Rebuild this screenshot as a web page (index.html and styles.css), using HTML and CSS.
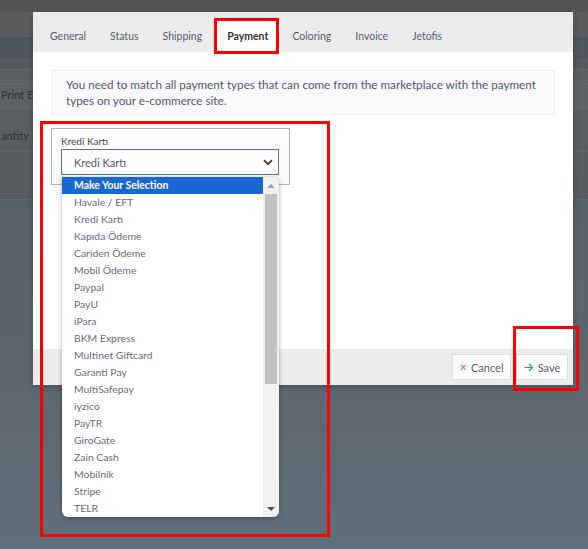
FILE: index.html
```html
<!DOCTYPE html>
<html>
<head>
<meta charset="utf-8">
<link rel="stylesheet" href="styles.css">
</head>
<body>
<div class="page">
  <div class="band b-top"></div>
  <div class="band b-nav"></div>
  <div class="band b-dark"></div>
  <div class="band b-dark2"></div>
  <div class="band b-thin"></div>
  <div class="band b-row"><span class="bg-text">Print E-</span><span class="bg-accent"></span></div>
  <div class="band b-gap"></div>
  <div class="band b-row2"><span class="bg-text">antity</span></div>
  <div class="band b-r3"></div>
  <div class="band b-r4"></div>
  <div class="band b-rest"></div>
</div>

<div class="modal">
  <div class="tabs">
    <span class="tab">General</span>
    <span class="tab">Status</span>
    <span class="tab">Shipping</span>
    <span class="tab active">Payment</span>
    <span class="tab">Coloring</span>
    <span class="tab">Invoice</span>
    <span class="tab">Jetofis</span>
  </div>
  <div class="body">
    <div class="alert">You need to match all payment types that can come from the marketplace with the payment types on your e-commerce site.</div>
    <div class="panel">
      <div class="label">Kredi Kartı</div>
      <div class="select">
        <span>Kredi Kartı</span>
        <svg class="chev" width="10" height="7" viewBox="0 0 10 7"><path d="M1 1.2 L5 5.2 L9 1.2" fill="none" stroke="#444" stroke-width="2"/></svg>
      </div>
    </div>
  </div>
  <div class="footer">
    <button class="btn btn-cancel"><span class="x">×</span>Cancel</button>
    <button class="btn btn-save"><svg class="arr" width="10" height="9" viewBox="0 0 10 9"><path d="M0.5 4.5 H8.5 M5 1 L8.5 4.5 L5 8" fill="none" stroke="#27a06a" stroke-width="1.2"/></svg>Save</button>
  </div>
</div>

<div class="dropdown">
  <ul class="options">
    <li class="sel">Make Your Selection</li>
    <li>Havale / EFT</li>
    <li>Kredi Kartı</li>
    <li>Kapıda Ödeme</li>
    <li>Cariden Ödeme</li>
    <li>Mobil Ödeme</li>
    <li>Paypal</li>
    <li>PayU</li>
    <li>iPara</li>
    <li>BKM Express</li>
    <li>Multinet Giftcard</li>
    <li>Garanti Pay</li>
    <li>MultiSafepay</li>
    <li>iyzico</li>
    <li>PayTR</li>
    <li>GiroGate</li>
    <li>Zain Cash</li>
    <li>Mobilnik</li>
    <li>Stripe</li>
    <li>TELR</li>
  </ul>
  <div class="scrollbar">
    <span class="sb-up"></span>
    <span class="sb-track"><span class="sb-thumb"></span></span>
    <span class="sb-down"></span>
  </div>
</div>

<div class="mark mark-tab"></div>
<div class="mark mark-list"></div>
<div class="mark mark-save"></div>
</body>
</html>
```
FILE: styles.css
```css
* { box-sizing: border-box; }
html, body { margin: 0; padding: 0; }
body {
  width: 588px;
  height: 549px;
  overflow: hidden;
  position: relative;
  font-family: Lato, "Open Sans", sans-serif;
  background: #5c6a74;
}
.page {
  display: flex;
  flex-direction: column;
  height: 549px;
}
.band { flex: none; display: flex; align-items: center; }
.b-top { height: 12px; background: #535557; }
.b-nav { height: 25px; background: #5b5c5e; }
.b-dark { height: 21px; background: #4f555a; }
.b-dark2 { height: 12px; background: #555a5e; border-bottom: 1px solid #62666a; }
.b-thin { height: 11px; background: #5a5f62; border-bottom: 1px solid #63676a; }
.b-row { height: 28px; background: #5e6265; border-bottom: 1px solid #65696c; }
.b-gap { height: 11px; background: #5b5f62; }
.b-row2 { height: 32px; background: #5b5f62; border-bottom: 1px solid #62666a; }
.b-r3 { height: 20px; background: #5a5e61; }
.b-r4 { height: 28px; background: #595d61; border-bottom: 1px solid #5f656a; }
.b-rest { flex: 1; background: linear-gradient(180deg, #596168 0%, #5c6770 50%, #5f707b 100%); }
.bg-text { font-size: 11px; color: #2a2e33; padding-left: 1px; }
.bg-accent { width: 3px; height: 12px; background: #8a6a2a; margin-left: 1px; }

.modal {
  position: absolute;
  left: 33px;
  top: 12px;
  width: 540px;
  height: 373px;
  background: #fff;
  display: flex;
  flex-direction: column;
  box-shadow: 0 2px 6px rgba(0,0,0,0.25);
}
.tabs {
  height: 40px;
  background: #ececec;
  display: flex;
  align-items: flex-end;
  padding-left: 5px;
}
.tab {
  height: 32px;
  padding: 0 12px;
  display: flex;
  align-items: center;
  font-size: 10.5px;
  color: #555d68;
}
.tab.active {
  background: #fff;
  color: #333;
  font-weight: bold;
  padding: 0 12px 0 13px;
}
.body {
  flex: 1;
  padding: 18px 18px 0 18px;
}
.alert {
  height: 45px;
  background: #fafafa;
  border: 1px solid #eeeeee;
  padding: 5px 6px 5px 14px;
  font-size: 11.7px;
  line-height: 16px;
  color: #4f556c;
}
.panel {
  margin-top: 13px;
  width: 239px;
  height: 57px;
  border: 1px solid #b0b0b0;
  background: linear-gradient(180deg, #fff 0%, #f8f8f8 100%);
  padding: 5px 10px 0 9px;
}
.label {
  font-size: 10px;
  color: #444;
  height: 15px;
  line-height: 15px;
}
.select {
  height: 26px;
  border: 1px solid #4a7d92;
  background: #fff;
  display: flex;
  align-items: center;
  justify-content: space-between;
  padding: 0 5px 0 12px;
  font-size: 11px;
  color: #555;
}
.chev { display: block; }
.footer {
  height: 36px;
  background: #ececec;
  display: flex;
  justify-content: flex-end;
  align-items: center;
  gap: 5px;
  padding-right: 5px;
}
.btn {
  height: 26px;
  margin: 0;
  border: 1px solid #dddddd;
  background: #fff;
  font-family: Lato, "Open Sans", sans-serif;
  font-size: 11px;
  color: #555b66;
  display: flex;
  align-items: center;
  justify-content: center;
  gap: 4px;
  padding: 0;
}
.btn-cancel { width: 59px; }
.btn-save { width: 52px; }
.x { color: #e05555; font-size: 13px; line-height: 1; }
.arr { display: block; }

.dropdown {
  position: absolute;
  left: 62px;
  top: 177px;
  width: 217px;
  height: 340px;
  background: #fff;
  border-radius: 0 6px 6px 6px;
  box-shadow: 0 1px 4px rgba(0,0,0,0.35);
  display: flex;
  overflow: hidden;
}
.options {
  list-style: none;
  margin: 0;
  padding: 0;
  flex: 1;
}
.options li {
  height: 17px;
  line-height: 17px;
  padding-left: 12px;
  font-size: 10.4px;
  color: #666a72;
}
.options li.sel {
  background: #1967d2;
  color: #fff;
  font-weight: bold;
}
.scrollbar {
  width: 16px;
  background: #f1f1f1;
  display: flex;
  flex-direction: column;
}
.sb-up, .sb-down {
  height: 17px;
  display: flex;
  align-items: center;
  justify-content: center;
}
.sb-up::before {
  content: "";
  border-left: 4px solid transparent;
  border-right: 4px solid transparent;
  border-bottom: 4px solid #a3a3a3;
}
.sb-down::before {
  content: "";
  border-left: 4px solid transparent;
  border-right: 4px solid transparent;
  border-top: 4px solid #505050;
}
.sb-track { flex: 1; padding: 0 2px; }
.sb-thumb { display: block; height: 190px; background: #c1c1c1; }

.mark {
  position: absolute;
  border: 3px solid #ff0000;
}
.mark-tab { left: 214px; top: 18px; width: 65px; height: 36px; }
.mark-list { left: 40px; top: 121px; width: 290px; height: 416px; }
.mark-save { left: 513px; top: 326px; width: 66px; height: 65px; }
```
